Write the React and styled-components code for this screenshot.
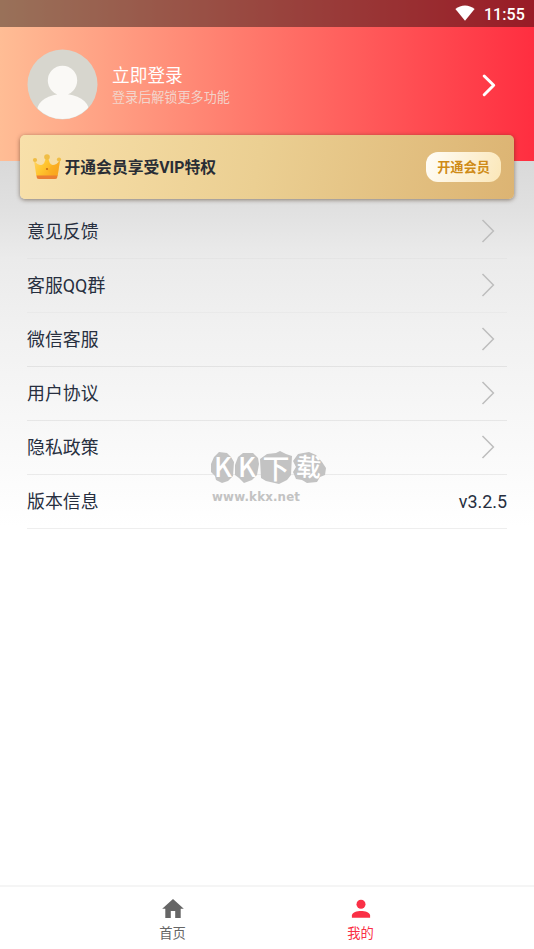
import React from "react";
import styled, { createGlobalStyle } from "styled-components";

const GlobalStyle = createGlobalStyle`
  * { box-sizing: border-box; }
  body { margin: 0; background: #fff; }
`;

const Screen = styled.div`
  display: flex;
  flex-direction: column;
  width: 534px;
  height: 949px;
  overflow: hidden;
  background: #fff;
  font-family: Roboto, "Noto Sans CJK SC", sans-serif;
  color: #272f3f;
`;

const Header = styled.header`
  flex: none;
  height: 161px;
  background: linear-gradient(90deg, #ffbd95 0%, #ff7469 50%, #ff2e40 100%);
`;

const StatusBar = styled.div`
  display: flex;
  align-items: center;
  justify-content: flex-end;
  gap: 9px;
  height: 27px;
  padding: 2px 9px 0 0;
  background: rgba(0, 0, 0, 0.4);
  color: #fff;
  font-size: 16px;
  font-weight: 500;
  letter-spacing: 0.1px;

  svg { margin-top: -3px; }
`;

const Profile = styled.div`
  display: flex;
  align-items: center;
  height: 115px;
  padding: 0 37px 0 27px;
`;

const ProfileText = styled.div`
  flex: 1;
  padding: 3px 0 0 14px;
`;

const LoginTitle = styled.div`
  font-size: 17.7px;
  line-height: 22px;
  color: #fff;
`;

const LoginHint = styled.div`
  font-size: 13.1px;
  line-height: 21px;
  color: rgba(240, 225, 220, 0.85);
`;

const Content = styled.main`
  flex: 1;
  display: flex;
  flex-direction: column;
  background: linear-gradient(180deg, #d9d9d9 0, #e0e0e0 45px, #ebebeb 98px, #f1f1f1 170px, #f8f8f8 270px, #fff 365px);
`;

const VipCard = styled.section`
  display: flex;
  align-items: center;
  height: 64px;
  margin: -26px 20px 6px;
  padding: 0 13px 0 12px;
  border-radius: 5px;
  background: linear-gradient(100deg, #f8e0aa, #ebcf92 48%, #dcb473);
  box-shadow: 0 1px 4px rgba(60, 40, 20, 0.55);
`;

const VipTitle = styled.div`
  flex: 1;
  padding: 2px 0 0 2.5px;
  font-size: 15.8px;
  font-weight: 700;
  line-height: 24px;
  color: #292d35;
`;

const VipButton = styled.button`
  width: 75px;
  height: 30px;
  padding: 0;
  border: 0;
  border-radius: 12px;
  background: linear-gradient(110deg, #fffdf8, #fbe7b8);
  color: #cf8b17;
  font: 700 13.2px/30px "Noto Sans CJK SC", sans-serif;
`;

const Menu = styled.div`
  position: relative;
  padding: 0 27px;
`;

const MenuRow = styled.div`
  display: flex;
  align-items: center;
  justify-content: space-between;
  height: 54px;
  padding-right: ${(p) => (p.$link ? "12px" : "0")};
  border-bottom: 1px solid rgba(0, 0, 0, ${(p) => (p.$faint ? 0.025 : 0.065)});
  font-size: 17.9px;
  line-height: 26px;

  svg { margin-top: -2px; }
`;

const Watermark = styled.div`
  position: absolute;
  left: 210px;
  top: 246px;
  width: 118px;
  height: 58px;

  svg { display: block; overflow: visible; }
`;

const TabBar = styled.nav`
  flex: none;
  display: flex;
  justify-content: center;
  height: 64px;
  border-top: 2px solid #f5f5f5;
  background: #fff;
`;

const Tab = styled.div`
  display: flex;
  flex-direction: column;
  align-items: center;
  width: 188px;
  padding-top: 11px;
  color: ${(p) => (p.$active ? "#fa3046" : "#666")};
  font-size: 13.3px;
  line-height: 20px;

  svg { display: block; margin-bottom: 5px; }
`;

const TabLabel = styled.span`
  padding-right: 1px;
`;

const WifiIcon = () => (
  <svg width="20" height="16" viewBox="0 0 20 16">
    <path d="M.4 4C6-.8 14-.8 19.6 4L10 15.8Z" fill="#fff" />
  </svg>
);

const Avatar = () => (
  <svg width="71" height="71" viewBox="0 0 71 71">
    <defs>
      <clipPath id="avatarClip"><circle cx="35.5" cy="35.5" r="34.6" /></clipPath>
    </defs>
    <circle cx="35.5" cy="35.5" r="35" fill="#d7d6ce" />
    <g clipPath="url(#avatarClip)" fill="#faf9f6">
      <circle cx="35.5" cy="31.5" r="14.7" />
      <path d="M30 43h11v4H30Z" />
      <ellipse cx="36" cy="61" rx="25.8" ry="16" />
    </g>
  </svg>
);

const HeaderArrow = () => (
  <svg width="16" height="24" viewBox="0 0 16 24" fill="none">
    <path d="M3.2 3 12.7 12.3 3.2 21.7" stroke="#fff" strokeWidth="3" strokeLinecap="round" strokeLinejoin="round" />
  </svg>
);

const RowArrow = () => (
  <svg width="14" height="24" viewBox="0 0 14 24" fill="none">
    <path d="M1.5 1 12.4 12 1.5 23" stroke="#bdbdbd" strokeWidth="1.5" />
  </svg>
);

const Crown = () => (
  <svg width="30" height="28" viewBox="0 0 30 28">
    <defs>
      <linearGradient id="crownGold" x1="0" y1="0" x2="1" y2="0.5">
        <stop offset="0" stopColor="#ffd66c" />
        <stop offset="0.5" stopColor="#ffc52e" />
        <stop offset="1" stopColor="#f9a51e" />
      </linearGradient>
    </defs>
    <path d="M2 7.5Q6 12.5 9.4 12 13 11 13.8 4.5H16.2Q17 11 20.6 12 24 12.5 28 7.5L25.6 23H4.4Z" fill="url(#crownGold)" />
    <path d="M15 17 20.6 12Q24 12.5 28 7.5L25.6 23H21Z" fill="#faaa20" opacity=".4" />
    <g fill="#f0bd45">
      <circle cx="3" cy="7" r="2.1" />
      <circle cx="15" cy="4" r="2.8" />
      <circle cx="27" cy="6.6" r="2.1" />
    </g>
    <path d="M4.6 22.5h20.8v1.2q0 2.2-2.2 2.2H6.8q-2.2 0-2.2-2.2Z" fill="#eb7f32" />
    <circle cx="15" cy="16" r="1.1" fill="#c76c16" />
  </svg>
);

const HomeIcon = () => (
  <svg width="22" height="21" viewBox="0 0 22 21">
    <path d="M11 1 .2 10.7H3.3V20H8.8V13H13.2V20H18.7V10.7H21.8Z" fill="#666" />
  </svg>
);

const PersonIcon = () => (
  <svg width="20" height="21" viewBox="0 0 20 21">
    <circle cx="10" cy="6.2" r="4.5" fill="#fa3046" />
    <path d="M.9 19.8V17.5C.9 14.3 6.2 12.9 10 12.9S19.1 14.3 19.1 17.5V19.8Z" fill="#fa3046" />
  </svg>
);

const WatermarkArt = () => (
  <svg width="118" height="58" viewBox="0 0 118 58">
    <g fill="#c3c3c3">
      <path d="M1 13 4 6 9 1 17 2 21 6 24 11 23 25 18 30 12 32 6 29 5 25 1 21Z" />
      <path d="M25 14 28 6 33 2 43 2 48 7 49 13 47 24 42 29 34 32 29 27 25 24Z" />
      <path d="M50 8 57 3 66 2 70 0 76 3 82 5 81 24 77 29 69 33 56 30 51 27Z" />
      <path d="M83 10 88 3 99 1 106 4 112 11 116 17 115 24 110 26 107 31 97 32 92 29 86 28 83 21 86 16Z" />
    </g>
    <g fill="#fff" fontFamily="'Noto Sans CJK SC', sans-serif" fontWeight="500">
      <text x="4" y="26" fontSize="27">K</text>
      <text x="28" y="26" fontSize="27">K</text>
      <text x="52.5" y="27.5" fontSize="27">下</text>
      <text x="86" y="25" fontSize="25" transform="rotate(4 98 16)">载</text>
    </g>
    <text x="2" y="50" fill="#c3c3c3" fontFamily="'DejaVu Sans', sans-serif" fontWeight="700" fontSize="11.8" textLength="88">www.kkx.net</text>
  </svg>
);

const links = ["意见反馈", "客服QQ群", "微信客服", "用户协议", "隐私政策"];

export default function App() {
  return (
    <Screen>
      <GlobalStyle />
      <Header>
        <StatusBar>
          <WifiIcon />
          <span>11:55</span>
        </StatusBar>
        <Profile>
          <Avatar />
          <ProfileText>
            <LoginTitle>立即登录</LoginTitle>
            <LoginHint>登录后解锁更多功能</LoginHint>
          </ProfileText>
          <HeaderArrow />
        </Profile>
      </Header>
      <Content>
        <VipCard>
          <Crown />
          <VipTitle>开通会员享受VIP特权</VipTitle>
          <VipButton>开通会员</VipButton>
        </VipCard>
        <Menu>
          {links.map((label, i) => (
            <MenuRow key={label} $link $faint={i < 2}>
              <span>{label}</span>
              <RowArrow />
            </MenuRow>
          ))}
          <MenuRow>
            <span>版本信息</span>
            <span>v3.2.5</span>
          </MenuRow>
          <Watermark>
            <WatermarkArt />
          </Watermark>
        </Menu>
      </Content>
      <TabBar>
        <Tab>
          <HomeIcon />
          <TabLabel>首页</TabLabel>
        </Tab>
        <Tab $active>
          <PersonIcon />
          <TabLabel>我的</TabLabel>
        </Tab>
      </TabBar>
    </Screen>
  );
}
